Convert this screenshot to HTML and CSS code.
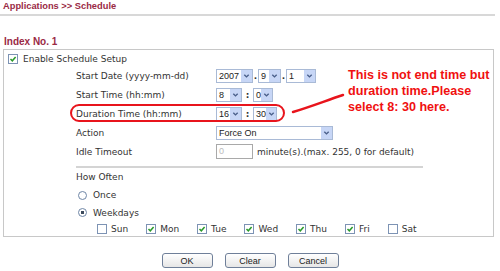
FILE: index.html
```html
<!DOCTYPE html>
<html lang="en">
<head>
    <meta charset="UTF-8">
    <title>Applications - Schedule</title>
    <link rel="stylesheet" href="styles.css">
</head>
<body>
<div class="page">
    <h1 class="title">Applications &gt;&gt; Schedule</h1>
    <div class="rule"></div>

    <h2 class="index">Index No. 1</h2>
    <div class="box">
        <div class="enable"><span class="cb on"><svg viewBox="0 0 8 8"><path d="M1.5 4 L3.3 5.8 L6.6 2"/></svg></span>Enable Schedule Setup</div>

        <div class="grid">
            <div class="lbl">Start Date (yyyy-mm-dd)</div>
            <div class="ctl">
                <span class="sel w37"><span class="val">2007</span><span class="arr"><svg viewBox="0 0 8 6"><path d="M1.5 1.5 L4 4 L6.5 1.5"/></svg></span></span>
                <span class="sep">.</span>
                <span class="sel w23"><span class="val">9</span><span class="arr"><svg viewBox="0 0 8 6"><path d="M1.5 1.5 L4 4 L6.5 1.5"/></svg></span></span>
                <span class="sep">.</span>
                <span class="sel w30"><span class="val">1</span><span class="arr"><svg viewBox="0 0 8 6"><path d="M1.5 1.5 L4 4 L6.5 1.5"/></svg></span></span>
            </div>

            <div class="lbl">Start Time (hh:mm)</div>
            <div class="ctl">
                <span class="sel w26"><span class="val">8</span><span class="arr"><svg viewBox="0 0 8 6"><path d="M1.5 1.5 L4 4 L6.5 1.5"/></svg></span></span>
                <span class="sep colon">:</span>
                <span class="sel w20"><span class="val">0</span><span class="arr"><svg viewBox="0 0 8 6"><path d="M1.5 1.5 L4 4 L6.5 1.5"/></svg></span></span>
            </div>

            <div class="lbl">Duration Time (hh:mm)</div>
            <div class="ctl">
                <span class="sel w26"><span class="val">16</span><span class="arr"><svg viewBox="0 0 8 6"><path d="M1.5 1.5 L4 4 L6.5 1.5"/></svg></span></span>
                <span class="sep colon">:</span>
                <span class="sel w24"><span class="val">30</span><span class="arr"><svg viewBox="0 0 8 6"><path d="M1.5 1.5 L4 4 L6.5 1.5"/></svg></span></span>
            </div>

            <div class="lbl">Action</div>
            <div class="ctl">
                <span class="sel w117"><span class="val">Force On</span><span class="arr"><svg viewBox="0 0 8 6"><path d="M1.5 1.5 L4 4 L6.5 1.5"/></svg></span></span>
            </div>

            <div class="lbl">Idle Timeout</div>
            <div class="ctl">
                <span class="txt">0</span>
                <span class="hint">minute(s).(max. 255, 0 for default)</span>
            </div>
        </div>

        <div class="divider"></div>

        <div class="often">How Often</div>
        <div class="opt"><span class="radio"></span>Once</div>
        <div class="opt opt-last"><span class="radio on"></span>Weekdays</div>

        <div class="days">
            <span class="day"><span class="cb"></span>Sun</span>
            <span class="day"><span class="cb on"><svg viewBox="0 0 8 8"><path d="M1.5 4 L3.3 5.8 L6.6 2"/></svg></span>Mon</span>
            <span class="day"><span class="cb on"><svg viewBox="0 0 8 8"><path d="M1.5 4 L3.3 5.8 L6.6 2"/></svg></span>Tue</span>
            <span class="day"><span class="cb on"><svg viewBox="0 0 8 8"><path d="M1.5 4 L3.3 5.8 L6.6 2"/></svg></span>Wed</span>
            <span class="day"><span class="cb on"><svg viewBox="0 0 8 8"><path d="M1.5 4 L3.3 5.8 L6.6 2"/></svg></span>Thu</span>
            <span class="day"><span class="cb on"><svg viewBox="0 0 8 8"><path d="M1.5 4 L3.3 5.8 L6.6 2"/></svg></span>Fri</span>
            <span class="day"><span class="cb"></span>Sat</span>
        </div>
    </div>

    <div class="buttons">
        <button class="btn">OK</button>
        <button class="btn">Clear</button>
        <button class="btn">Cancel</button>
    </div>

    <!-- annotation drawn over the form -->
    <div class="ring"></div>
    <svg class="pointer" width="60" height="24" viewBox="0 0 60 24"><path d="M3 20 C20 15 35 9 53 3"/></svg>
    <div class="note">This is not end time but<br>duration time.Please<br>select 8: 30 here.</div>
</div>
</body>
</html>
```

FILE: styles.css
```css
body {
    margin: 0;
    font-family: "DejaVu Sans", Verdana, sans-serif;
    font-size: 9px;
    color: #333;
    background: #fff;
}

.page {
    position: relative;
    width: 500px;
    height: 271px;
}

.title,
.index {
    margin: 0;
    font: bold 10px/12px "Liberation Sans", Arial, sans-serif;
    color: #9a2a45;
}

.title {
    padding-left: 3px;
    font-size: 9.3px;
}

.rule {
    height: 2px;
    margin: 2px 5px 0 0;
    background: #d8d8d8;
}

.index {
    margin-top: 20px;
    padding-left: 4px;
}

.box {
    margin: 1px 6px 0 3px;
    padding-top: 2px;
    border: 1px solid #c8c8c8;
}

.enable {
    display: flex;
    align-items: center;
    height: 14px;
    padding-left: 4px;
}

.cb {
    display: inline-flex;
    align-items: center;
    justify-content: center;
    box-sizing: border-box;
    width: 10px;
    height: 10px;
    margin-right: 5px;
    border: 1px solid #7d93b4;
    background: #fff;
}

.cb svg {
    width: 8px;
    height: 8px;
    fill: none;
    stroke: #2a9a2a;
    stroke-width: 1.5;
}

.grid {
    display: grid;
    grid-template-columns: 140px auto;
    grid-auto-rows: 19px;
    margin-left: 72px;
}

.lbl,
.ctl {
    display: flex;
    align-items: center;
}

.sel {
    display: inline-flex;
    box-sizing: border-box;
    height: 14px;
    border: 1px solid #a9bad6;
    background: #fff;
    font: 9px "Liberation Sans", Arial, sans-serif;
    color: #222;
}

.sel .val {
    flex: 1;
    padding-left: 2px;
    line-height: 12px;
}

.sel .arr {
    display: flex;
    align-items: center;
    justify-content: center;
    width: 11px;
    background: #c7d6f6;
}

.arr svg {
    width: 7px;
    height: 6px;
    fill: none;
    stroke: #4a5f8a;
    stroke-width: 1.6;
}

.w20 { width: 20px; }
.w23 { width: 23px; }
.w24 { width: 24px; }
.w26 { width: 26px; }
.w30 { width: 30px; }
.w37 { width: 37px; }
.w117 { width: 117px; }

.sep {
    width: 5px;
    text-align: center;
    font-weight: bold;
}

.colon {
    width: 11px;
}

.txt {
    box-sizing: border-box;
    width: 37px;
    height: 15px;
    padding-left: 2px;
    border: 1px solid #a9a9a9;
    font: 9px/13px "Liberation Sans", Arial, sans-serif;
    color: #bbb;
}

.hint {
    margin-left: 4px;
}

.divider {
    width: 347px;
    height: 2px;
    margin: 5px 0 0 72px;
    background: #d4d4d4;
}

.often {
    height: 18px;
    line-height: 18px;
    margin-left: 72px;
}

.opt {
    display: flex;
    align-items: center;
    height: 18px;
    margin-left: 74px;
}

.opt-last {
    height: 17px;
}

.radio {
    box-sizing: border-box;
    width: 9px;
    height: 9px;
    margin-right: 6px;
    border: 1px solid #6f86a6;
    border-radius: 50%;
    background: #fff;
}

.radio.on {
    background: radial-gradient(circle, #3b4a5c 0 1.6px, #fff 2px);
}

.days {
    display: flex;
    align-items: center;
    gap: 18px;
    height: 15px;
    margin-left: 93px;
}

.day {
    display: flex;
    align-items: center;
}

.day .cb {
    margin-right: 4px;
}

.buttons {
    display: flex;
    justify-content: center;
    gap: 12px;
    margin-top: 16px;
}

.btn {
    box-sizing: border-box;
    width: 51px;
    height: 15px;
    padding: 0;
    border: 1px solid #6f7f99;
    border-radius: 3px;
    background: linear-gradient(#ffffff, #e6e6e6);
    font: 9px "Liberation Sans", Arial, sans-serif;
    color: #222;
}

.ring {
    position: absolute;
    left: 70px;
    top: 104px;
    width: 211px;
    height: 14px;
    border: 2px solid #e8141c;
    border-radius: 9px;
}

.pointer {
    position: absolute;
    left: 290px;
    top: 92px;
}

.pointer path {
    fill: none;
    stroke: #e8141c;
    stroke-width: 2.5;
    stroke-linecap: round;
}

.note {
    position: absolute;
    left: 348px;
    top: 67px;
    font: bold 12.6px/16px "Liberation Sans", Arial, sans-serif;
    color: #f01010;
}
```
